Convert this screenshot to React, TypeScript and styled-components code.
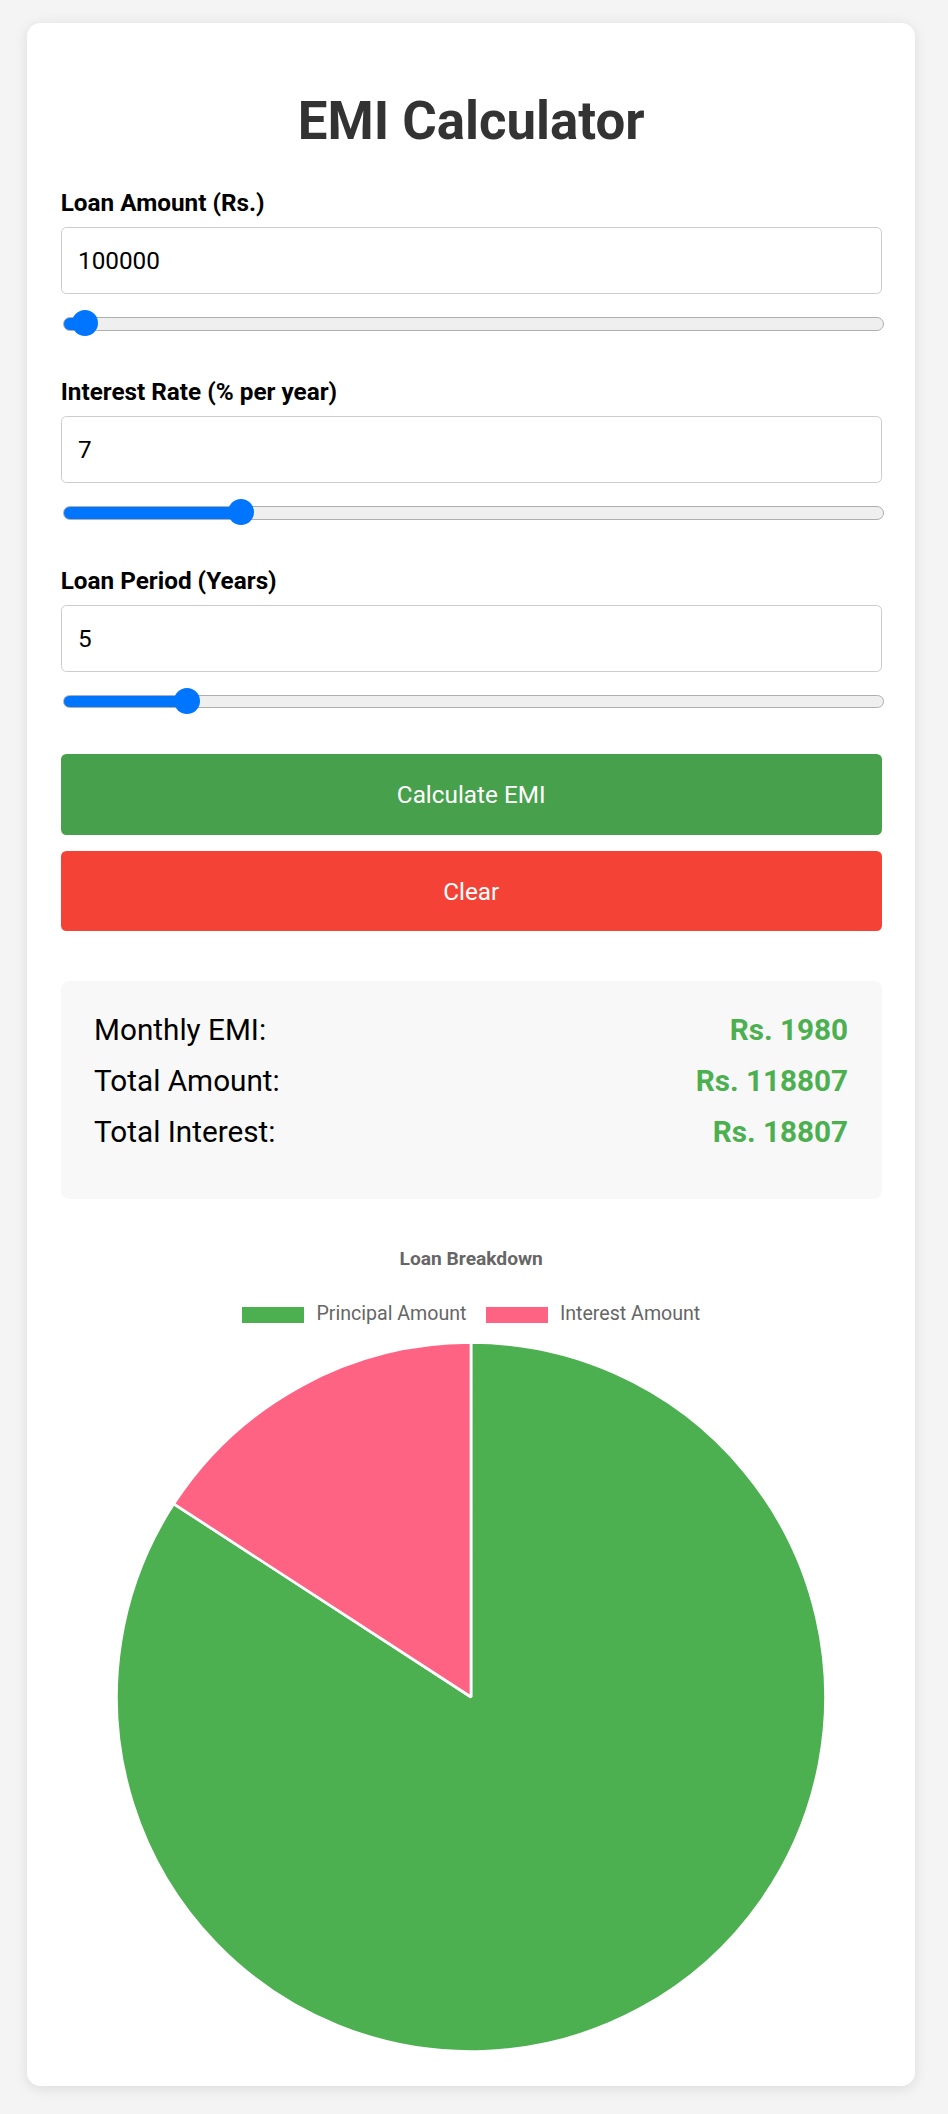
import React, { useState } from 'react';
import styled, { createGlobalStyle } from 'styled-components';

const GlobalStyle = createGlobalStyle`
  html, body {
    margin: 0;
    padding: 0;
    background: #f4f4f4;
  }
  body {
    font-family: Roboto, "Noto Sans", "Liberation Sans", Arial, sans-serif;
    color: #000;
  }
  *, *::before, *::after {
    box-sizing: border-box;
  }
`;

const Page = styled.div`
  padding: 22.7px 0 27.3px 27.3px;
`;

const Card = styled.main`
  width: 887.4px;
  background: #fff;
  border-radius: 13.5px;
  box-shadow: 0 2.7px 13.5px rgba(0, 0, 0, 0.1);
  padding: 33.75px 33px 33.25px 33.4px;
  display: flex;
  flex-direction: column;
`;

const Title = styled.h1`
  margin: 33.1px 0 37.45px;
  font-size: 52.8px;
  line-height: 62.5px;
  font-weight: 700;
  color: #333;
  text-align: center;
`;

const Field = styled.div`
  display: flex;
  flex-direction: column;
  & + & {
    margin-top: 41.7px;
  }
`;

const Label = styled.label`
  display: block;
  font-size: 24.3px;
  line-height: 28.5px;
  font-weight: 700;
  color: #000;
  margin-bottom: 9.5px;
`;

const NumberInput = styled.input`
  height: 66.3px;
  width: 100%;
  border: 1.35px solid #cccccc;
  border-radius: 5.4px;
  padding: 0 16.3px;
  font-family: Roboto, "Noto Sans", sans-serif;
  font-size: 24.3px;
  color: #000;
  background: #fff;
  outline: none;
  -moz-appearance: textfield;
  &::-webkit-outer-spin-button,
  &::-webkit-inner-spin-button {
    -webkit-appearance: none;
    margin: 0;
  }
`;

const Range = styled.input<{ $fill: number }>`
  -webkit-appearance: none;
  appearance: none;
  display: block;
  width: 100%;
  height: 26px;
  margin: 17px 0 0 2.7px;
  padding: 0;
  background: transparent;
  outline: none;

  &::-webkit-slider-runnable-track {
    height: 13.5px;
    border-radius: 7px;
    border: 1.35px solid #aeaeae;
    background: linear-gradient(
      to right,
      #0075ff 0,
      #0075ff calc(13px + ${(p) => p.$fill} * (100% - 26px)),
      #efefef calc(13px + ${(p) => p.$fill} * (100% - 26px)),
      #efefef 100%
    );
  }
  &::-webkit-slider-thumb {
    -webkit-appearance: none;
    appearance: none;
    width: 26px;
    height: 26px;
    border-radius: 50%;
    background: #0075ff;
    border: none;
    margin-top: -7.6px;
  }
`;

const Actions = styled.div`
  margin-top: 39.25px;
  display: flex;
  flex-direction: column;
  gap: 16px;
`;

const ActionButton = styled.button<{ $variant: 'primary' | 'danger' }>`
  width: 100%;
  height: 80.7px;
  border: none;
  border-radius: 5.4px;
  font-family: Roboto, "Noto Sans", sans-serif;
  font-size: 24.3px;
  font-weight: 400;
  color: #fff;
  cursor: pointer;
  background: ${(p) => (p.$variant === 'danger' ? '#f44336' : '#47a04b')};
`;

const Results = styled.section`
  margin-top: 49.3px;
  background: #f8f8f8;
  border-radius: 8px;
  padding: 32.4px 33.6px 49.4px 33.4px;
  display: flex;
  flex-direction: column;
  gap: 16.05px;
`;

const ResultRow = styled.div`
  display: flex;
  justify-content: space-between;
  align-items: baseline;
  font-size: 29.7px;
  line-height: 34.8px;
`;

const ResultLabel = styled.span`
  color: #000;
`;

const ResultValue = styled.span`
  color: #4caf50;
  font-weight: 700;
`;

const ChartSection = styled.section`
  display: flex;
  flex-direction: column;
  align-items: center;
`;

const ChartTitle = styled.div`
  margin-top: 48.9px;
  font-size: 19.2px;
  line-height: 22.5px;
  font-weight: 700;
  color: #666;
  text-align: center;
`;

const Legend = styled.div`
  margin-top: 32.1px;
  height: 23px;
  display: flex;
  justify-content: center;
  gap: 19.2px;
`;

const LegendItem = styled.div`
  display: flex;
  align-items: center;
  gap: 12.3px;
  font-size: 19.6px;
  line-height: 23px;
  color: #666;
`;

const Swatch = styled.span<{ $color: string }>`
  display: block;
  width: 62px;
  height: 16px;
  margin-top: 2px;
  background: ${(p) => p.$color};
`;

const PieSvg = styled.svg`
  display: block;
  margin-top: 15.65px;
  width: 712px;
  height: 712px;
`;

const PRINCIPAL_COLOR = '#4caf50';
const INTEREST_COLOR = '#ff6384';

function computeEmi(amount: number, rate: number, years: number) {
  const r = rate / 12 / 100;
  const n = years * 12;
  if (!amount || !n) return { emi: 0, total: 0, interest: 0 };
  const emi = r === 0 ? amount / n : (amount * r * Math.pow(1 + r, n)) / (Math.pow(1 + r, n) - 1);
  const total = emi * n;
  return { emi, total, interest: total - amount };
}

function PieChart({ principal, interest }: { principal: number; interest: number }) {
  const cx = 356;
  const cy = 356;
  const R = 354.5;
  const sum = principal + interest || 1;
  const frac = principal / sum;
  const theta = frac * Math.PI * 2;
  const x1 = cx + R * Math.sin(theta);
  const y1 = cy - R * Math.cos(theta);
  const large = frac > 0.5 ? 1 : 0;
  const principalPath = `M ${cx} ${cy} L ${cx} ${cy - R} A ${R} ${R} 0 ${large} 1 ${x1} ${y1} Z`;
  const interestPath = `M ${cx} ${cy} L ${x1} ${y1} A ${R} ${R} 0 ${1 - large} 1 ${cx} ${cy - R} Z`;
  return (
    <PieSvg viewBox="0 0 712 712">
      <path d={principalPath} fill={PRINCIPAL_COLOR} stroke="#fff" strokeWidth={2.7} strokeLinejoin="bevel" />
      <path d={interestPath} fill={INTEREST_COLOR} stroke="#fff" strokeWidth={2.7} strokeLinejoin="bevel" />
    </PieSvg>
  );
}

type FieldDef = {
  key: 'amount' | 'rate' | 'years';
  label: string;
  min: number;
  max: number;
  step: number;
};

const FIELDS: FieldDef[] = [
  { key: 'amount', label: 'Loan Amount (Rs.)', min: 50000, max: 5000000, step: 1000 },
  { key: 'rate', label: 'Interest Rate (% per year)', min: 1, max: 30, step: 0.1 },
  { key: 'years', label: 'Loan Period (Years)', min: 1, max: 30, step: 1 },
];

const DEFAULTS = { amount: '100000', rate: '7', years: '5' };

export default function App() {
  const [values, setValues] = useState<Record<FieldDef['key'], string>>(DEFAULTS);
  const [result, setResult] = useState(() => computeEmi(100000, 7, 5));

  const update = (key: FieldDef['key'], v: string) => setValues((s) => ({ ...s, [key]: v }));

  const calculate = () => {
    setResult(computeEmi(Number(values.amount), Number(values.rate), Number(values.years)));
  };

  const clear = () => {
    setValues({ amount: '', rate: '', years: '' });
    setResult({ emi: 0, total: 0, interest: 0 });
  };

  const principal = result.total - result.interest;

  return (
    <>
      <GlobalStyle />
      <Page>
        <Card>
          <Title>EMI Calculator</Title>
          {FIELDS.map((f) => {
            const num = Number(values[f.key]) || f.min;
            const fill = Math.min(1, Math.max(0, (num - f.min) / (f.max - f.min)));
            return (
              <Field key={f.key}>
                <Label htmlFor={f.key}>{f.label}</Label>
                <NumberInput
                  id={f.key}
                  type="number"
                  value={values[f.key]}
                  onChange={(e) => update(f.key, e.target.value)}
                />
                <Range
                  type="range"
                  min={f.min}
                  max={f.max}
                  step={f.step}
                  value={num}
                  $fill={fill}
                  onChange={(e) => update(f.key, e.target.value)}
                />
              </Field>
            );
          })}
          <Actions>
            <ActionButton $variant="primary" onClick={calculate}>
              Calculate EMI
            </ActionButton>
            <ActionButton $variant="danger" onClick={clear}>
              Clear
            </ActionButton>
          </Actions>
          <Results>
            <ResultRow>
              <ResultLabel>Monthly EMI:</ResultLabel>
              <ResultValue>Rs. {Math.round(result.emi)}</ResultValue>
            </ResultRow>
            <ResultRow>
              <ResultLabel>Total Amount:</ResultLabel>
              <ResultValue>Rs. {Math.round(result.total)}</ResultValue>
            </ResultRow>
            <ResultRow>
              <ResultLabel>Total Interest:</ResultLabel>
              <ResultValue>Rs. {Math.round(result.interest)}</ResultValue>
            </ResultRow>
          </Results>
          <ChartSection>
            <ChartTitle>Loan Breakdown</ChartTitle>
            <Legend>
              <LegendItem>
                <Swatch $color={PRINCIPAL_COLOR} />
                Principal Amount
              </LegendItem>
              <LegendItem>
                <Swatch $color={INTEREST_COLOR} />
                Interest Amount
              </LegendItem>
            </Legend>
            <PieChart principal={principal} interest={result.interest} />
          </ChartSection>
        </Card>
      </Page>
    </>
  );
}
